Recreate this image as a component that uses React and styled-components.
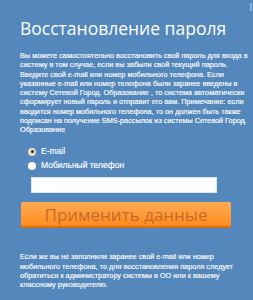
import React from "react";
import styled, { createGlobalStyle } from "styled-components";

const Global = createGlobalStyle`
  html, body { margin: 0; padding: 0; background: #5487bb; }
  body { width: 253px; height: 300px; overflow: hidden; }
`;

const Page = styled.div`
  width: 253px;
  height: 300px;
  background: #5487bb;
  padding: 16px 0 0 20px;
  box-sizing: border-box;
  color: #fff;
  position: relative;
`;

const Title = styled.h1`
  margin: 0;
  font-family: "Open Sans", sans-serif;
  font-weight: 400;
  font-size: 17.5px;
  line-height: 24px;
  color: #fff;
`;

const Text = styled.div`
  font-family: "Liberation Sans", Arial, sans-serif;
  font-size: 7.3px;
  line-height: 9.25px;
  color: #fff;
  -webkit-text-stroke: 0.15px #fff;
  margin-top: ${(p) => p.$mt}px;
`;

const Line = styled.div`
  white-space: nowrap;
`;

const Options = styled.div`
  display: flex;
  flex-direction: column;
  gap: 5px;
  margin: 13px 0 0 8px;
`;

const Option = styled.label`
  display: flex;
  align-items: center;
  gap: 5px;
  font-family: "Liberation Sans", Arial, sans-serif;
  font-size: 8.5px;
  line-height: 9px;
  color: #fff;
  -webkit-text-stroke: 0.15px #fff;
`;

const Radio = styled.span`
  width: 8px;
  height: 8px;
  border-radius: 50%;
  background: ${(p) => (p.$checked ? "#e8dcc4" : "#fff")};
  display: flex;
  align-items: center;
  justify-content: center;
  &::after {
    content: "";
    width: 3px;
    height: 3px;
    border-radius: 50%;
    background: ${(p) => (p.$checked ? "#3a3020" : "transparent")};
  }
`;

const Input = styled.div`
  width: 186px;
  height: 16px;
  margin: 7px 0 0 11px;
  background: #fff;
  border: 1px solid #dfe6ee;
  box-sizing: border-box;
`;

const Button = styled.div`
  width: 210px;
  height: 26px;
  margin: 9px 0 0 1px;
  box-sizing: border-box;
  border-radius: 2px;
  background: linear-gradient(#ffab55, #ff8b1e);
  border-bottom: 2px solid #d96e10;
  display: flex;
  align-items: center;
  justify-content: center;
  font-family: "Open Sans", sans-serif;
  font-size: 17px;
  color: #c56a2a;
`;

const Scroll = styled.div`
  position: absolute;
  right: 1px;
  top: 3px;
  width: 2px;
  height: 8px;
  background: #8fb3d8;
`;

const desc = [
  "Вы можете самостоятельно восстановить свой пароль для входа в",
  "систему в том случае, если вы забыли свой текущий пароль.",
  "Введите свой e-mail или номер мобильного телефона. Если",
  "указанные e-mail или номер телефона были заранее введены в",
  "систему Сетевой Город. Образование , то система автоматически",
  "сформирует новый пароль и отправит его вам. Примечание: если",
  "вводится номер мобильного телефона, то он должен быть также",
  "подписан на получение SMS-рассылок из системы Сетевой Город.",
  "Образование",
];

const foot = [
  "Если же вы не заполнили заранее свой e-mail или номер",
  "мобильного телефона, то для восстановления пароля следует",
  "обратиться к администратору системы в ОО или к вашему",
  "классному руководителю.",
];

export default function App() {
  return (
    <Page>
      <Global />
      <Scroll />
      <Title>Восстановление пароля</Title>
      <Text $mt={11}>
        {desc.map((l, i) => (
          <Line key={i}>{l}</Line>
        ))}
      </Text>
      <Options>
        <Option>
          <Radio $checked />
          E-mail
        </Option>
        <Option>
          <Radio />
          Мобильный телефон
        </Option>
      </Options>
      <Input />
      <Button>Применить данные</Button>
      <Text $mt={24}>
        {foot.map((l, i) => (
          <Line key={i}>{l}</Line>
        ))}
      </Text>
    </Page>
  );
}
